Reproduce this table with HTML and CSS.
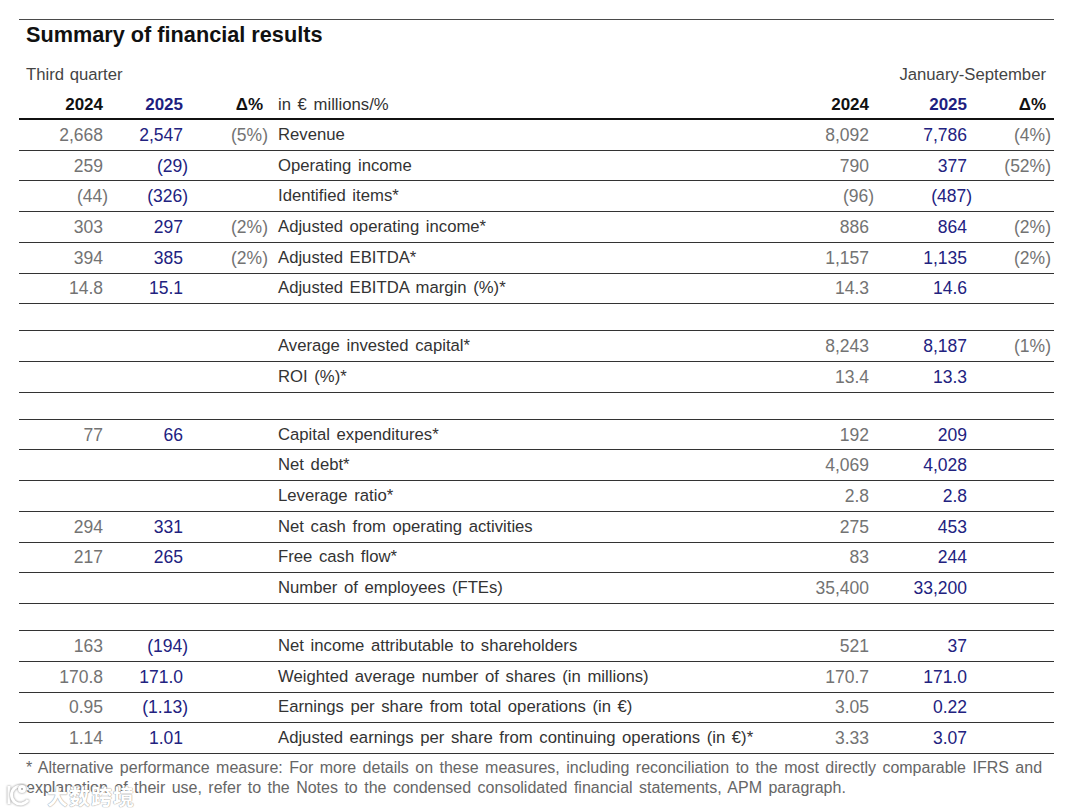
FILE: index.html
```html
<!DOCTYPE html>
<html lang="en">
<head>
<meta charset="utf-8">
<link rel="stylesheet" href="styles.css">
</head>
<body>
<div class="page">
  <div class="sheet">
    <h1 class="title">Summary of financial results</h1>
    <div class="periods">
      <span>Third quarter</span>
      <span>January-September</span>
    </div>
    <table class="fin">
      <colgroup>
        <col class="w1"><col class="w2"><col class="w3"><col class="wl"><col class="w5"><col class="w6"><col class="w7">
      </colgroup>
      <thead>
        <tr>
          <th class="num y24"><span class="np">2024</span></th>
          <th class="num y25"><span class="np">2025</span></th>
          <th class="num"><span class="np">Δ%</span></th>
          <th class="lbl">in € millions/%</th>
          <th class="num y24"><span class="np">2024</span></th>
          <th class="num y25"><span class="np">2025</span></th>
          <th class="num last"><span class="np">Δ%</span></th>
        </tr>
      </thead>
      <tbody>
        <tr><td class="num a"><span class="np">2,668</span></td><td class="num b"><span class="np">2,547</span></td><td class="num a">(5%)</td><td class="lbl">Revenue</td><td class="num a"><span class="np">8,092</span></td><td class="num b"><span class="np">7,786</span></td><td class="num a last">(4%)</td></tr>
        <tr><td class="num a"><span class="np">259</span></td><td class="num b">(29)</td><td class="num a"></td><td class="lbl">Operating income</td><td class="num a"><span class="np">790</span></td><td class="num b"><span class="np">377</span></td><td class="num a last">(52%)</td></tr>
        <tr><td class="num a">(44)</td><td class="num b">(326)</td><td class="num a"></td><td class="lbl">Identified items*</td><td class="num a">(96)</td><td class="num b">(487)</td><td class="num a last"></td></tr>
        <tr><td class="num a"><span class="np">303</span></td><td class="num b"><span class="np">297</span></td><td class="num a">(2%)</td><td class="lbl">Adjusted operating income*</td><td class="num a"><span class="np">886</span></td><td class="num b"><span class="np">864</span></td><td class="num a last">(2%)</td></tr>
        <tr><td class="num a"><span class="np">394</span></td><td class="num b"><span class="np">385</span></td><td class="num a">(2%)</td><td class="lbl">Adjusted EBITDA*</td><td class="num a"><span class="np">1,157</span></td><td class="num b"><span class="np">1,135</span></td><td class="num a last">(2%)</td></tr>
        <tr><td class="num a"><span class="np">14.8</span></td><td class="num b"><span class="np">15.1</span></td><td class="num a"></td><td class="lbl">Adjusted EBITDA margin (%)*</td><td class="num a"><span class="np">14.3</span></td><td class="num b"><span class="np">14.6</span></td><td class="num a last"></td></tr>
        <tr class="gap"><td colspan="7"></td></tr>
        <tr><td class="num a"></td><td class="num b"></td><td class="num a"></td><td class="lbl">Average invested capital*</td><td class="num a"><span class="np">8,243</span></td><td class="num b"><span class="np">8,187</span></td><td class="num a last">(1%)</td></tr>
        <tr><td class="num a"></td><td class="num b"></td><td class="num a"></td><td class="lbl">ROI (%)*</td><td class="num a"><span class="np">13.4</span></td><td class="num b"><span class="np">13.3</span></td><td class="num a last"></td></tr>
        <tr class="gap"><td colspan="7"></td></tr>
        <tr><td class="num a"><span class="np">77</span></td><td class="num b"><span class="np">66</span></td><td class="num a"></td><td class="lbl">Capital expenditures*</td><td class="num a"><span class="np">192</span></td><td class="num b"><span class="np">209</span></td><td class="num a last"></td></tr>
        <tr><td class="num a"></td><td class="num b"></td><td class="num a"></td><td class="lbl">Net debt*</td><td class="num a"><span class="np">4,069</span></td><td class="num b"><span class="np">4,028</span></td><td class="num a last"></td></tr>
        <tr><td class="num a"></td><td class="num b"></td><td class="num a"></td><td class="lbl">Leverage ratio*</td><td class="num a"><span class="np">2.8</span></td><td class="num b"><span class="np">2.8</span></td><td class="num a last"></td></tr>
        <tr><td class="num a"><span class="np">294</span></td><td class="num b"><span class="np">331</span></td><td class="num a"></td><td class="lbl">Net cash from operating activities</td><td class="num a"><span class="np">275</span></td><td class="num b"><span class="np">453</span></td><td class="num a last"></td></tr>
        <tr><td class="num a"><span class="np">217</span></td><td class="num b"><span class="np">265</span></td><td class="num a"></td><td class="lbl">Free cash flow*</td><td class="num a"><span class="np">83</span></td><td class="num b"><span class="np">244</span></td><td class="num a last"></td></tr>
        <tr><td class="num a"></td><td class="num b"></td><td class="num a"></td><td class="lbl">Number of employees (FTEs)</td><td class="num a"><span class="np">35,400</span></td><td class="num b"><span class="np">33,200</span></td><td class="num a last"></td></tr>
        <tr class="gap"><td colspan="7"></td></tr>
        <tr><td class="num a"><span class="np">163</span></td><td class="num b">(194)</td><td class="num a"></td><td class="lbl">Net income attributable to shareholders</td><td class="num a"><span class="np">521</span></td><td class="num b"><span class="np">37</span></td><td class="num a last"></td></tr>
        <tr><td class="num a"><span class="np">170.8</span></td><td class="num b"><span class="np">171.0</span></td><td class="num a"></td><td class="lbl">Weighted average number of shares (in millions)</td><td class="num a"><span class="np">170.7</span></td><td class="num b"><span class="np">171.0</span></td><td class="num a last"></td></tr>
        <tr><td class="num a"><span class="np">0.95</span></td><td class="num b">(1.13)</td><td class="num a"></td><td class="lbl">Earnings per share from total operations (in €)</td><td class="num a"><span class="np">3.05</span></td><td class="num b"><span class="np">0.22</span></td><td class="num a last"></td></tr>
        <tr><td class="num a"><span class="np">1.14</span></td><td class="num b"><span class="np">1.01</span></td><td class="num a"></td><td class="lbl">Adjusted earnings per share from continuing operations (in €)*</td><td class="num a"><span class="np">3.33</span></td><td class="num b"><span class="np">3.07</span></td><td class="num a last"></td></tr>
      </tbody>
    </table>
    <p class="note">* Alternative performance measure: For more details on these measures, including reconciliation to the most directly comparable IFRS and explanation of their use, refer to the Notes to the condensed consolidated financial statements, APM paragraph.</p>
  </div>
  <div class="watermark">
    <svg class="wm-logo" width="26" height="24" viewBox="0 0 26 24">
      <path d="M4 3 L4 21" />
      <path d="M23 7 A9 9 0 1 0 23 17" />
      <circle cx="17" cy="6" r="2.5" />
    </svg>
    <span class="wm-text">大数跨境</span>
  </div>
</div>
</body>
</html>
```
FILE: styles.css
```css
html, body {
  margin: 0;
  padding: 0;
  background: #ffffff;
}
body {
  font-family: "Liberation Sans", Arial, sans-serif;
  color: #333333;
}
.page {
  position: relative;
  width: 1080px;
  height: 812px;
  overflow: hidden;
}
.sheet {
  margin: 19px 0 0 19px;
  width: 1035px;
  border-top: 1px solid #4a4a4a;
}
.title {
  margin: 0;
  padding: 1px 0 0 7px;
  height: 27px;
  font-size: 21.7px;
  line-height: 27px;
  font-weight: bold;
  color: #111111;
}
.periods {
  display: flex;
  justify-content: space-between;
  padding: 0 8px 0 7px;
  margin-top: 16px;
  height: 22px;
  line-height: 22px;
  font-size: 16.7px;
  word-spacing: 1px;
  color: #444444;
}
.fin {
  border-collapse: collapse;
  table-layout: fixed;
  width: 1035px;
  font-size: 17.5px;
}
.w1 { width: 89px; }
.w2 { width: 80px; }
.w3 { width: 80px; }
.wl { width: 532px; }
.w5 { width: 74px; }
.w6 { width: 98px; }
.w7 { width: 82px; }
.fin th {
  height: 26px;
  padding: 6px 0 0 0;
  font-size: 17px;
  font-weight: bold;
  color: #111111;
  border-bottom: 2px solid #111111;
  vertical-align: middle;
  white-space: nowrap;
}
.fin th.lbl {
  font-weight: normal;
  font-size: 16.7px;
  word-spacing: 2px;
  color: #333333;
  text-align: left;
  padding-left: 10px;
}
.fin th.y25 { color: #1e1e80; }
.fin td {
  height: 29.72px;
  padding: 0;
  border-bottom: 1px solid #333333;
  vertical-align: middle;
  white-space: nowrap;
  line-height: 20px;
}
.fin tr.gap td { height: 26px; }
.num { text-align: right; }
.last { padding-right: 3px !important; }
.np { padding-right: 5px; }
.a { color: #737373; }
.b { color: #22227f; }
.fin td.lbl {
  text-align: left;
  padding-left: 10px;
  font-size: 16.7px;
  word-spacing: 2px;
  color: #333333;
}
.note {
  margin: 4px 0 0 7px;
  font-size: 16px;
  word-spacing: 2px;
  line-height: 20px;
  color: #666666;
  width: 1028px;
}
.watermark {
  position: absolute;
  left: 5px;
  top: 783px;
  display: flex;
  align-items: center;
  gap: 16px;
}
.wm-logo path, .wm-logo circle {
  fill: none;
  stroke: #ffffff;
  stroke-width: 3;
  filter: drop-shadow(0 0 1px #888888);
}
.wm-text {
  font-family: "Noto Sans CJK SC", sans-serif;
  font-size: 21px;
  line-height: 24px;
  font-weight: bold;
  color: #ffffff;
  letter-spacing: 1px;
  text-shadow: 0 0 1px #999999, 0 0 1px #999999;
}
```
